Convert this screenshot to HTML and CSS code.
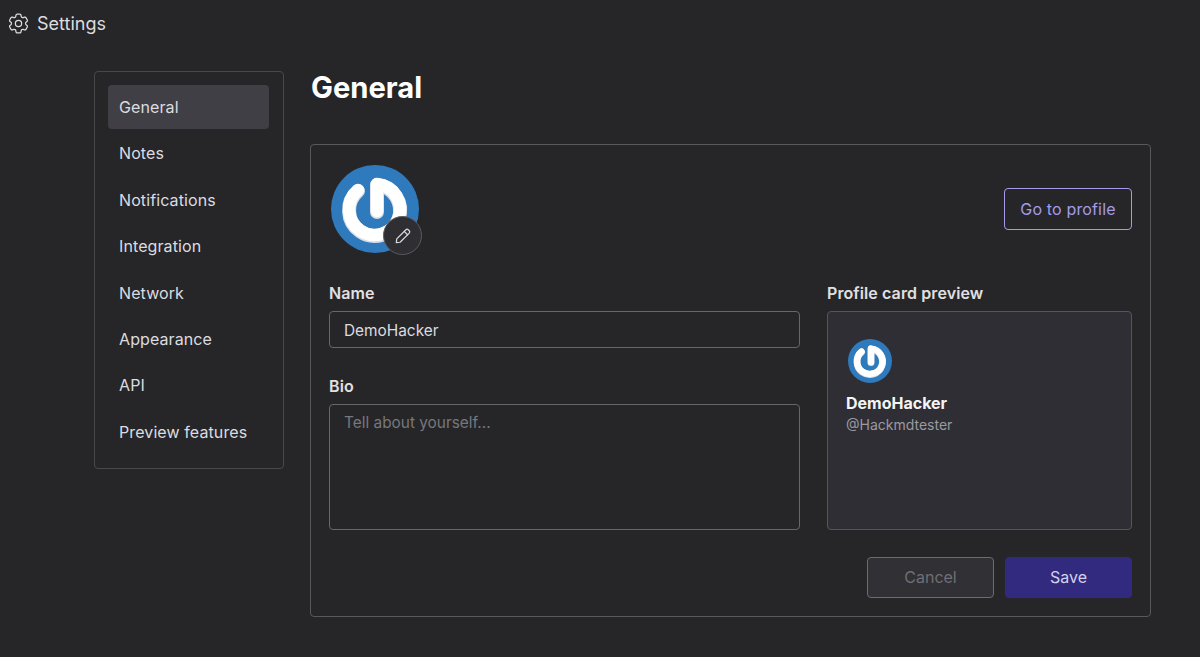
FILE: index.html
```html
<!DOCTYPE html>
<html lang="en">
<head>
	<meta charset="UTF-8">
	<title>Settings</title>
	<link rel="stylesheet" href="styles.css">
</head>
<body>
	<svg class="defs" width="0" height="0">
		<symbol id="logo" viewBox="0 0 88 88">
			<circle cx="44" cy="44" r="44" fill="#2f7abd"/>
			<path d="M27 25A25.5 25.5 0 1 0 46 19V46" fill="none" stroke="#d9dee6" stroke-width="14" stroke-linecap="round" stroke-linejoin="round" transform="translate(0 1)"/>
			<path d="M27 25A25.5 25.5 0 1 0 46 19V46" fill="none" stroke="#fff" stroke-width="12.5" stroke-linecap="round" stroke-linejoin="round"/>
		</symbol>
	</svg>
	<header class="top">
		<svg class="gear" viewBox="0 0 24 24" fill="none" stroke="currentColor" stroke-width="1.2" stroke-linejoin="round">
			<path d="M9.594 3.94c.09-.542.56-.94 1.11-.94h2.593c.55 0 1.02.398 1.11.94l.213 1.281c.063.374.313.686.645.87.074.04.147.083.22.127.325.196.72.257 1.075.124l1.217-.456a1.125 1.125 0 0 1 1.37.49l1.296 2.247a1.125 1.125 0 0 1-.26 1.431l-1.003.827c-.293.241-.438.613-.43.992a7.723 7.723 0 0 1 0 .255c-.008.378.137.75.43.991l1.004.827c.424.35.534.955.26 1.43l-1.298 2.247a1.125 1.125 0 0 1-1.369.491l-1.217-.456c-.355-.133-.75-.072-1.076.124a6.47 6.47 0 0 1-.22.128c-.331.183-.581.495-.644.869l-.213 1.281c-.09.543-.56.94-1.11.94h-2.594c-.55 0-1.019-.398-1.11-.94l-.213-1.281c-.062-.374-.312-.686-.644-.87a6.52 6.52 0 0 1-.22-.127c-.325-.196-.72-.257-1.076-.124l-1.217.456a1.125 1.125 0 0 1-1.369-.49l-1.297-2.247a1.125 1.125 0 0 1 .26-1.431l1.004-.827c.292-.24.437-.613.43-.991a6.932 6.932 0 0 1 0-.255c.007-.38-.138-.751-.43-.992l-1.004-.827a1.125 1.125 0 0 1-.26-1.43l1.297-2.247a1.125 1.125 0 0 1 1.37-.491l1.216.456c.356.133.751.072 1.076-.124.072-.044.146-.086.22-.128.332-.183.582-.495.644-.869l.214-1.28Z"/>
			<circle cx="12" cy="12" r="3"/>
		</svg>
		<span class="top_title">Settings</span>
	</header>
	<div class="wrap">
		<ul class="nav">
			<li class="nav_item active">General</li>
			<li class="nav_item">Notes</li>
			<li class="nav_item">Notifications</li>
			<li class="nav_item">Integration</li>
			<li class="nav_item">Network</li>
			<li class="nav_item">Appearance</li>
			<li class="nav_item">API</li>
			<li class="nav_item">Preview features</li>
		</ul>
		<div class="main">
			<h1 class="title">General</h1>
			<div class="panel">
				<div class="panel_top">
					<div class="avatar">
						<svg class="avatar_img"><use href="#logo"/></svg>
						<div class="edit">
							<svg viewBox="0 0 24 24" fill="none" stroke="currentColor" stroke-width="1.5" stroke-linejoin="round" stroke-linecap="round">
								<path d="M15.5 4.5a2 2 0 0 1 2.8 0l1.2 1.2a2 2 0 0 1 0 2.8L8.5 19.5 4 20l.5-4.5z"/>
								<path d="M13.5 6.5l4 4"/>
							</svg>
						</div>
					</div>
					<a class="btn_link">Go to profile</a>
				</div>
				<div class="form">
					<div class="form_left">
						<label class="label">Name</label>
						<input class="input" type="text" value="DemoHacker">
						<label class="label label_bio">Bio</label>
						<textarea class="input area" placeholder="Tell about yourself..."></textarea>
					</div>
					<div class="form_right">
						<label class="label">Profile card preview</label>
						<div class="card">
							<svg class="card_img"><use href="#logo"/></svg>
							<div class="card_name">DemoHacker</div>
							<div class="card_user">@Hackmdtester</div>
						</div>
					</div>
				</div>
				<div class="actions">
					<button class="btn cancel">Cancel</button>
					<button class="btn save">Save</button>
				</div>
			</div>
		</div>
	</div>
</body>
</html>
```

FILE: styles.css
```css
body{
	margin:0;
	height:657px;
	overflow:hidden;
	background:#262628;
	color:#dcdce0;
	font-family:Inter,"Liberation Sans",sans-serif;
}
ul{
	margin:0;
	padding:0;
	list-style:none;
}
.defs{
	display:block;
}
.top{
	display:flex;
	align-items:center;
	gap:6px;
	height:46px;
	padding-left:6px;
}
.gear{
	width:25px;
	height:25px;
	color:#dcdce0;
}
.top_title{
	font-size:18px;
}
.wrap{
	display:flex;
	align-items:flex-start;
	gap:26px;
	padding:25px 50px 0 94px;
}
.nav{
	width:161px;
	padding:13px 14px 14px 13px;
	border:1px solid #47474c;
	border-radius:4px;
	flex:none;
}
.nav_item{
	height:44px;
	margin-bottom:2.4px;
	padding-left:11px;
	line-height:44px;
	font-size:16px;
	letter-spacing:.1px;
	border-radius:4px;
}
.nav_item:last-child{
	margin-bottom:0;
}
.nav_item.active{
	background:#3f3f45;
}
.main{
	flex:1;
}
.title{
	margin:0 0 37px 1px;
	height:36px;
	line-height:34px;
	font-size:29.2px;
	font-weight:700;
	color:#fff;
}
.panel{
	height:473px;
	box-sizing:border-box;
	padding:19px 18px 18px 18px;
	border:1px solid #58585d;
	border-radius:4px;
}
.panel_top{
	display:flex;
	justify-content:space-between;
	align-items:center;
	padding-left:2px;
	height:90px;
}
.avatar{
	position:relative;
	width:88px;
	height:88px;
}
.avatar_img{
	display:block;
	width:88px;
	height:88px;
}
.edit{
	position:absolute;
	left:52px;
	top:51px;
	width:39px;
	height:39px;
	box-sizing:border-box;
	display:flex;
	align-items:center;
	justify-content:center;
	background:#2f2e33;
	border:1px solid #5a5a60;
	border-radius:50%;
	color:#d8d8dc;
}
.edit svg{
	width:20px;
	height:20px;
}
.btn_link{
	width:128px;
	height:42px;
	box-sizing:border-box;
	line-height:40px;
	text-align:center;
	font-size:16px;
	letter-spacing:.15px;
	color:#a49be8;
	border:1px solid #a49be8;
	border-radius:4px;
}
.form{
	display:grid;
	grid-template-columns:471px 305px;
	gap:27px;
	margin-top:30px;
}
.label{
	display:block;
	height:18px;
	margin-bottom:9px;
	line-height:18px;
	font-size:16px;
	font-weight:600;
	letter-spacing:.1px;
	color:#e0e0e3;
}
.label_bio{
	margin-top:29px;
}
.input{
	display:block;
	width:100%;
	height:37px;
	box-sizing:border-box;
	padding:1px 14px 0;
	background:transparent;
	border:1px solid #66666b;
	border-radius:4px;
	font:15.4px Inter,"Liberation Sans",sans-serif;
	color:#dcdce0;
	outline:none;
}
.area{
	height:126px;
	padding-top:8px;
	resize:none;
}
.area::placeholder{
	color:#77777c;
	opacity:1;
}
.card{
	height:219px;
	box-sizing:border-box;
	padding:27px 18px;
	background:#2f2e35;
	border:1px solid #55555b;
	border-radius:4px;
}
.card_img{
	display:block;
	width:44px;
	height:44px;
	margin-left:2px;
}
.card_name{
	margin-top:10px;
	line-height:20px;
	font-size:16px;
	font-weight:700;
	color:#f4f4f5;
}
.card_user{
	margin-top:3px;
	line-height:18px;
	font-size:14px;
	color:#9a9aa0;
}
.actions{
	display:flex;
	justify-content:flex-end;
	gap:11px;
	margin-top:27px;
}
.btn{
	width:127px;
	height:41px;
	box-sizing:border-box;
	padding-bottom:2px;
	font:16px Inter,"Liberation Sans",sans-serif;
	border-radius:4px;
}
.cancel{
	background:#303035;
	border:1px solid #6b6b70;
	color:#6f6f75;
}
.save{
	background:#312a7f;
	border:1px solid #312a7f;
	color:#d5d2ef;
}
```
